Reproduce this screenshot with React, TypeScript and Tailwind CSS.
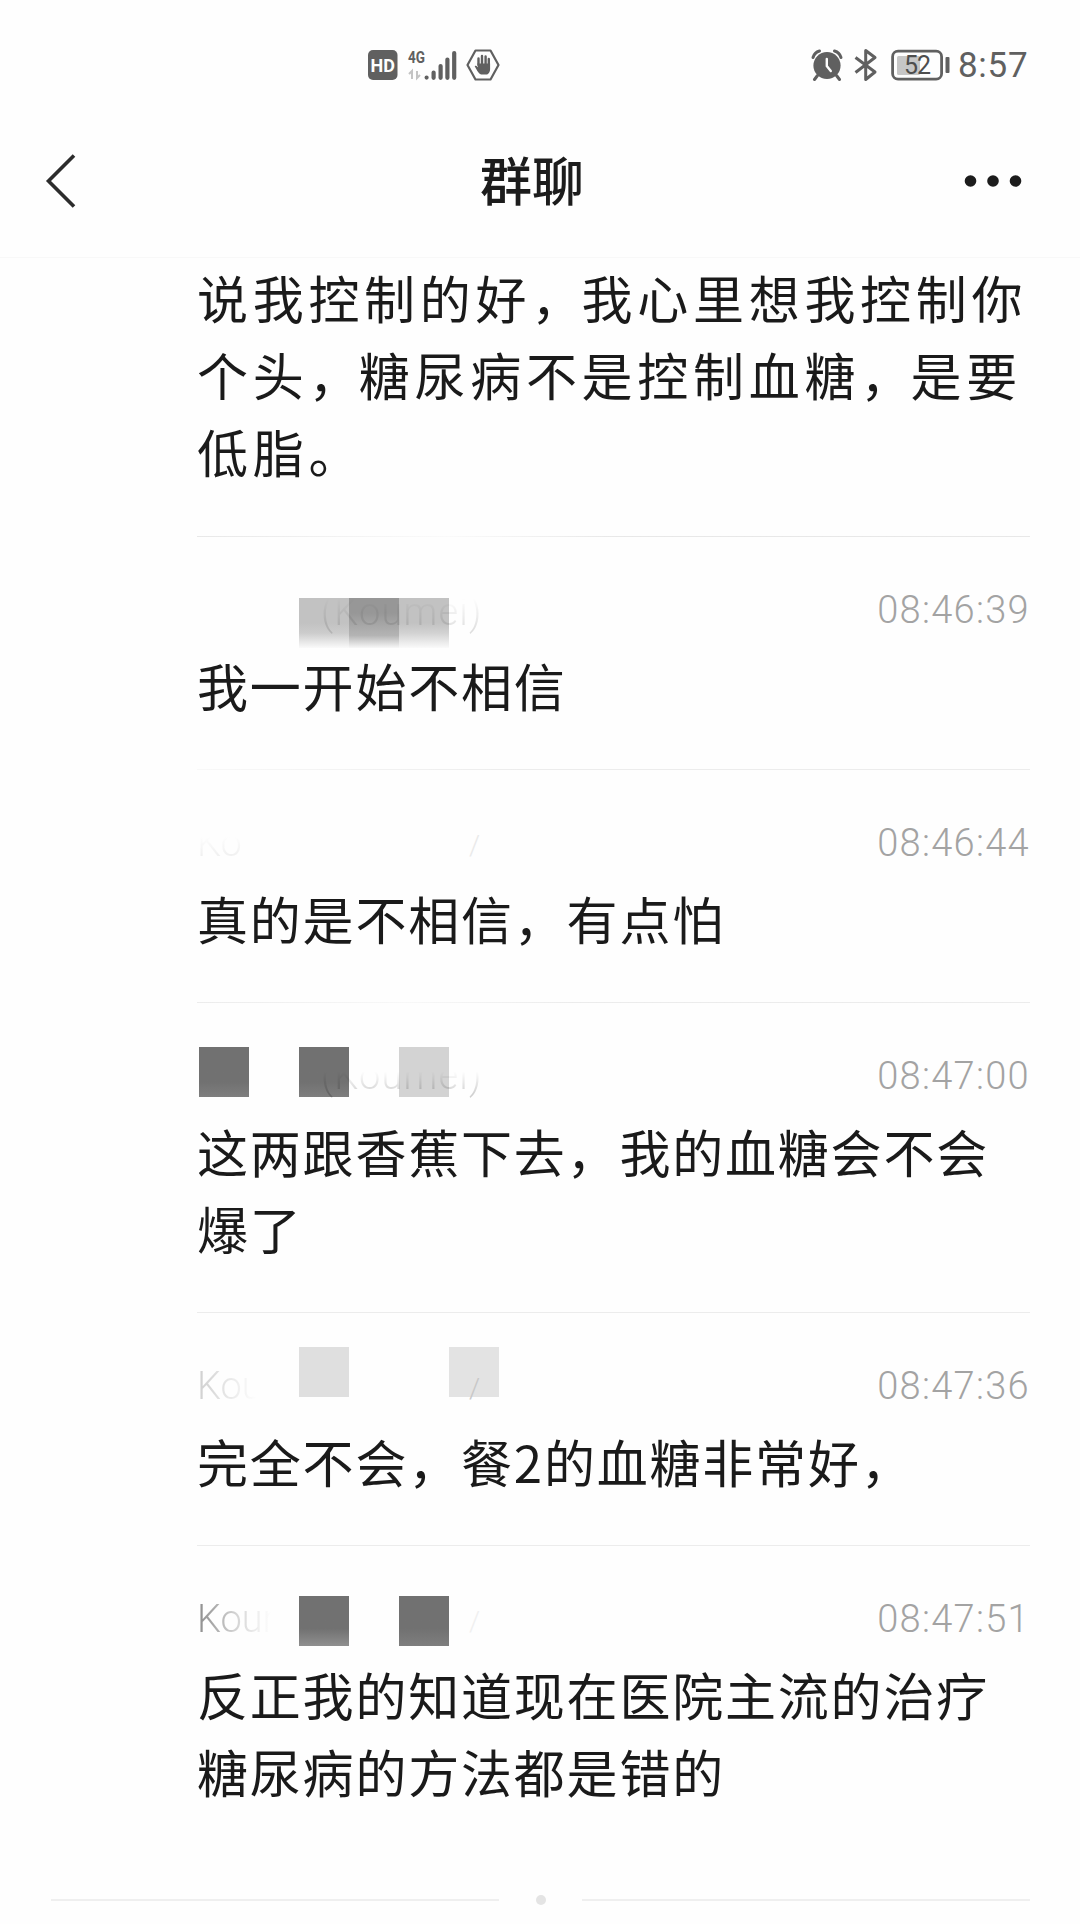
import React from 'react';
import clsx from 'clsx';

type Message = {
    time: string;
    name?: React.ReactNode;
    lines: string[];
    tiles: string[];
    divider?: string;
};

const messages: Message[] = [
    {
        time: '08:46:39',
        name: (
            <span className="absolute left-[124px] top-[2px] z-10 bg-linear-to-b from-transparent from-20% to-black/12 to-90% bg-clip-text text-transparent tracking-[1.2px]">
                (Koumei)
            </span>
        ),
        lines: ['我一开始不相信'],
        tiles: [
            'left-[102px] top-[11px] bg-linear-to-b from-[#c2c2c2] from-50% via-[#cccccc] via-70% to-[#fafafa]',
            'left-[152px] top-[11px] bg-linear-to-b from-[#979797] from-30% via-[#b4b4b4] via-75% to-[#f8f8f8]',
            'left-[202px] top-[11px] bg-linear-to-b from-[#c2c2c2] from-50% via-[#d2d2d2] via-70% to-[#fafafa]',
        ],
        divider: 'from-[#f8f8f8] via-[#ececec] via-40% to-[#ececec]',
    },
    {
        time: '08:46:44',
        name: (
            <>
                <span className="bg-linear-to-b from-[#fefefe] from-35% to-[#eaeaea] bg-clip-text text-transparent">Ko</span>
                <span className="absolute left-[272px] top-[3px] text-[28px] text-[#eaeaea]">/</span>
            </>
        ),
        lines: ['真的是不相信，有点怕'],
        tiles: [],
        divider: 'from-[#ececec] via-[#f8f8f8] via-25% to-[#ececec] to-45%',
    },
    {
        time: '08:47:00',
        name: (
            <span className="absolute left-[124px] top-0 z-10 bg-linear-to-b from-transparent from-40% to-black/18 to-90% bg-clip-text text-transparent tracking-[1.2px]">
                (Koumei)
            </span>
        ),
        lines: ['这两跟香蕉下去，我的血糖会不会', '爆了'],
        tiles: [
            'left-[2px] top-[-6px] bg-linear-to-b from-[#717171] from-70% to-[#7e7e7e]',
            'left-[102px] top-[-6px] bg-linear-to-b from-[#717171] from-70% to-[#7e7e7e]',
            'left-[202px] top-[-6px] bg-[#d3d3d3]',
        ],
        divider: 'from-[#ececec] to-[#ececec]',
    },
    {
        time: '08:47:36',
        name: (
            <>
                <span className="bg-linear-to-r from-[#cfcfcf] to-[#fefefe] to-90% bg-clip-text text-transparent">Kou</span>
                <span className="absolute left-[272px] top-[3px] z-10 text-[28px] text-[#c8c8c8]">/</span>
            </>
        ),
        lines: ['完全不会，餐2的血糖非常好，'],
        tiles: ['left-[102px] top-[-16px] bg-[#dfdfdf]', 'left-[252px] top-[-16px] bg-[#e3e3e3]'],
        divider: 'from-[#ececec] to-[#ececec]',
    },
    {
        time: '08:47:51',
        name: (
            <>
                <span className="bg-linear-to-r from-[#8c8c8c] via-[#d4d4d4] via-50% to-[#fefefe] to-95% bg-clip-text text-transparent">
                    Kour
                </span>
                <span className="absolute left-[272px] top-[3px] text-[28px] text-[#f0f0f0]">/</span>
            </>
        ),
        lines: ['反正我的知道现在医院主流的治疗', '糖尿病的方法都是错的'],
        tiles: [
            'left-[102px] top-0 bg-linear-to-b from-[#717171] from-65% to-[#8f8f8f]',
            'left-[202px] top-0 bg-linear-to-b from-[#717171] from-65% to-[#7e7e7e]',
        ],
    },
];

const StatusBar = () => (
    <div className="flex h-[130px] items-center pl-[368px] text-[#606060]">
        <svg width="30" height="30" viewBox="0 0 30 30">
            <rect width="29.5" height="30" rx="5" fill="currentColor" />
            <text x="14.8" y="21.5" textAnchor="middle" fontFamily="Roboto, sans-serif" fontWeight="700" fontSize="18" fill="#fefefe">
                HD
            </text>
        </svg>

        {/* Signal */}
        <svg className="ml-[9px] overflow-visible" width="52" height="32" viewBox="0 0 52 32">
            <text x="1" y="14" fontFamily="Roboto, sans-serif" fontWeight="700" fontSize="17" textLength="17" lengthAdjust="spacingAndGlyphs" fill="currentColor">
                4G
            </text>
            <path d="M5 30V22l-3 3M10 22v7l3-3" fill="none" stroke="#c4c4c4" strokeWidth="2" />
            <g stroke="currentColor" strokeWidth="4.2" strokeLinecap="round">
                <path d="M19.6 28.5v.1M26.6 23.5v5.3M33.6 17v11.8M40.4 10.5v18.3M47.2 4v24.8" />
            </g>
        </svg>

        {/* Hand in hexagon */}
        <svg className="ml-[7px]" width="34" height="32" viewBox="0 0 34 32">
            <path d="M9.5 1.5h15L32.5 16l-8 14.5h-15L1.5 16z" fill="none" stroke="currentColor" strokeWidth="2.2" strokeLinejoin="round" />
            <path d="M12.5 16V9.5M16 15V7M19.6 15V7.5M22.8 16v-6" stroke="currentColor" strokeWidth="2.4" strokeLinecap="round" />
            <path d="M11.3 14.5h12.8v5.5c0 3-1.8 5.5-3.5 5.5h-5.2c-2.4 0-4-3.5-6.7-8.2 1.2-1 2.3-.1 3.4 1.2z" fill="currentColor" />
        </svg>

        {/* Alarm */}
        <svg className="ml-[311px]" width="32" height="32" viewBox="0 0 32 32">
            <circle cx="16" cy="16.5" r="13.6" fill="currentColor" />
            <path d="M2 8.5C3 5 5 3 8.5 2M30 8.5C29 5 27 3 23.5 2" fill="none" stroke="currentColor" strokeWidth="3" strokeLinecap="round" />
            <path d="M6.5 26.5l-3 4M25.5 26.5l3 4" stroke="currentColor" strokeWidth="3" strokeLinecap="round" />
            <path d="M15.8 10v7l4 5" fill="none" stroke="#fefefe" strokeWidth="2.4" strokeLinecap="round" />
        </svg>

        {/* Bluetooth */}
        <svg className="ml-[11px]" width="24" height="34" viewBox="0 0 24 34">
            <path d="M1.5 9.5L21 24l-9.3 7.5v-29L21 9.5 1.5 24.5" fill="none" stroke="currentColor" strokeWidth="3" strokeLinejoin="round" />
        </svg>

        {/* Battery */}
        <svg className="ml-[13px]" width="60" height="32" viewBox="0 0 60 32">
            <rect x="1.6" y="2.2" width="49" height="28" rx="5.5" fill="none" stroke="currentColor" strokeWidth="2.8" />
            <rect x="6" y="7" width="23" height="19" rx="1.5" fill="#c6c6c6" />
            <rect x="54.5" y="8" width="4" height="16" rx="1" fill="currentColor" />
            <text x="26" y="25" textAnchor="middle" fontFamily="Roboto, sans-serif" fontSize="25" letterSpacing="-1" fill="#4e4e4e">
                52
            </text>
        </svg>

        <span className="ml-[7px] font-[Roboto,sans-serif] text-[35px] leading-none tracking-[0.7px]">8:57</span>
    </div>
);

const TitleBar = () => (
    <div className="flex h-[128px] items-center justify-between border-b border-[#f8f8f8] pb-[25px] pl-[45px] pr-[58px] text-[#1c1c1c]">
        <svg width="32" height="56" viewBox="0 0 32 56">
            <path d="M29 2.5L3.5 28 29 53.5" fill="none" stroke="#2c2c2c" strokeWidth="3.6" />
        </svg>
        <h1 className="mb-[5px] ml-[23px] text-[52px] font-medium leading-none">群聊</h1>
        <svg width="58" height="14" viewBox="0 0 58 14" fill="currentColor">
            <circle cx="6.5" cy="7" r="5.8" />
            <circle cx="29" cy="7" r="5.8" />
            <circle cx="51.5" cy="7" r="5.8" />
        </svg>
    </div>
);

const MessageRow: React.FC<{ message: Message }> = ({ message }) => (
    <article className="pt-[50px]">
        <div className="relative mb-[14px] flex h-[46px] items-center justify-between font-[Roboto,sans-serif] text-[38px] font-light leading-[46px]">
            <div>
                {message.tiles.map((tile) => (
                    <span key={tile} className={clsx('absolute size-[50px]', tile)} />
                ))}
                {message.name}
            </div>
            <time className="tracking-[1.3px] text-[#a3a3a3]">{message.time}</time>
        </div>
        {message.lines.map((line) => (
            <p key={line} className="whitespace-nowrap tracking-[1.8px]">
                {line}
            </p>
        ))}
        {message.divider && <div className={clsx('mt-[45px] h-px bg-linear-to-r', message.divider)} />}
    </article>
);

export default function App() {
    return (
        <div className="flex h-[1924px] w-[1080px] flex-col overflow-hidden bg-[#fefefe] font-['Noto_Sans_CJK_SC',sans-serif]">
            <StatusBar />
            <TitleBar />
            <main className="flex-1 pl-[197px] pr-[50px] text-[51px] leading-[77px] text-[#1a1a1a]">
                <article className="pt-px">
                    <p className="whitespace-nowrap tracking-[4.7px]">说我控制的好<span className="tracking-[-0.6px]">，</span>我心里想我控制你</p>
                    <p className="whitespace-nowrap tracking-[4.7px]">个头<span className="tracking-[-0.6px]">，</span>糖尿病不是控制血糖<span className="tracking-[-0.6px]">，</span>是要</p>
                    <p className="whitespace-nowrap tracking-[4.7px]">低脂。</p>
                    <div className="mt-[46px] h-px bg-linear-to-r from-[#e8e8e8] via-[#fafafa] via-30% to-[#e8e8e8] to-50%" />
                </article>
                {messages.map((message) => (
                    <MessageRow key={message.time} message={message} />
                ))}
            </main>
            <footer className="flex h-[48px] items-center justify-between pl-[51px] pr-[50px]">
                <div className="h-[2px] w-[448px] bg-[#efefef]" />
                <div className="size-[10px] rounded-full bg-[#e4e4e4]" />
                <div className="h-[2px] w-[448px] bg-[#efefef]" />
            </footer>
        </div>
    );
}
